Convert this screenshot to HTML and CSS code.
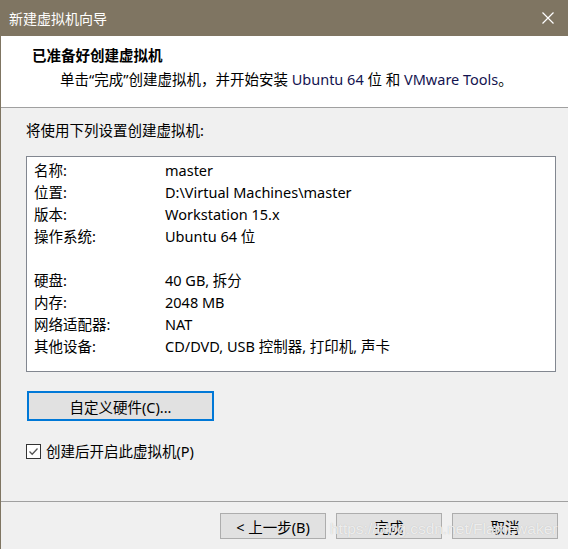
FILE: index.html
```html
<!DOCTYPE html>
<html lang="zh-CN">
<head>
    <meta charset="UTF-8">
    <title>新建虚拟机向导</title>
    <link rel="stylesheet" href="styles.css">
</head>
<body>
    <div class="window">
        <div class="titlebar">
            <span class="title">新建虚拟机向导</span>
            <span class="close">
                <svg width="12" height="12" viewBox="0 0 12 12">
                    <path d="M0.5 0.5 L11.5 11.5 M11.5 0.5 L0.5 11.5" stroke="#fff" stroke-width="1.2" fill="none"/>
                </svg>
            </span>
        </div>

        <div class="header">
            <div class="heading">已准备好创建虚拟机</div>
            <div class="subheading">单击“完成”创建虚拟机，并开始安装 <span class="en">Ubuntu 64</span> 位 和 <span class="en">VMware Tools</span>。</div>
        </div>

        <div class="content">
            <div class="intro">将使用下列设置创建虚拟机:</div>

            <div class="summary">
                <div class="row"><span class="key">名称:</span><span class="val">master</span></div>
                <div class="row"><span class="key">位置:</span><span class="val">D:\Virtual Machines\master</span></div>
                <div class="row"><span class="key">版本:</span><span class="val">Workstation 15.x</span></div>
                <div class="row"><span class="key">操作系统:</span><span class="val">Ubuntu 64 位</span></div>
                <div class="row"></div>
                <div class="row"><span class="key">硬盘:</span><span class="val">40 GB, 拆分</span></div>
                <div class="row"><span class="key">内存:</span><span class="val">2048 MB</span></div>
                <div class="row"><span class="key">网络适配器:</span><span class="val">NAT</span></div>
                <div class="row"><span class="key">其他设备:</span><span class="val">CD/DVD, USB 控制器, 打印机, 声卡</span></div>
            </div>

            <button class="btn btn-focus">自定义硬件(C)...</button>

            <label class="check">
                <span class="box">
                    <svg width="11" height="11" viewBox="0 0 11 11">
                        <path d="M1.5 5.5 L4.2 8.2 L9.5 2.5" stroke="#555" stroke-width="1.3" fill="none"/>
                    </svg>
                </span>
                创建后开启此虚拟机(P)
            </label>
        </div>

        <div class="footer">
            <button class="btn">&lt; 上一步(B)</button>
            <button class="btn">完成</button>
            <button class="btn">取消</button>
        </div>

        <div class="watermark">https://blog.csdn.net/Flamewaker</div>
    </div>
</body>
</html>
```

FILE: styles.css
```css
body {
    margin: 0;
    font-family: "Noto Sans", "Noto Sans CJK SC", sans-serif;
    font-size: 14.5px;
    color: #000000;
    background: #f0f0f0;
}
.window {
    position: relative;
    width: 567px;
    height: 549px;
    border-left: 1px solid #7f7562;
    background: #f0f0f0;
    display: flex;
    flex-direction: column;
    overflow: hidden;
}
.titlebar {
    height: 36px;
    background: #7f7562;
    display: flex;
    align-items: center;
    justify-content: space-between;
    padding-left: 8px;
    color: #ffffff;
}
.title {
    font-size: 14px;
}
.close {
    width: 40px;
    display: flex;
    justify-content: center;
}
.header {
    height: 63px;
    background: #ffffff;
    border-bottom: 1px solid #a0a0a0;
    padding-top: 8px;
    box-sizing: content-box;
}
.heading {
    font-weight: bold;
    padding-left: 31px;
    line-height: 22px;
}
.subheading {
    padding-left: 59px;
    line-height: 22px;
    margin-top: 2px;
}
.en {
    color: #141450;
}
.content {
    flex: 1;
    padding: 11px 12px 0 25px;
}
.intro {
    line-height: 22px;
}
.summary {
    margin-top: 15px;
    height: 212px;
    background: #ffffff;
    border: 1px solid #828790;
    padding-top: 2px;
}
.row {
    display: flex;
    height: 22px;
    line-height: 22px;
}
.key {
    width: 131px;
    padding-left: 7px;
}
.btn {
    font-family: inherit;
    font-size: 14.5px;
    color: #000000;
    background: #e1e1e1;
    border: 1px solid #adadad;
    width: 106px;
    height: 26px;
    padding: 0;
}
.btn-focus {
    margin-top: 19px;
    margin-left: 1px;
    width: 187px;
    height: 30px;
    border: 2px solid #0078d7;
    display: block;
}
.check {
    display: flex;
    align-items: center;
    gap: 5px;
    margin-top: 19px;
    margin-left: 0;
    line-height: 22px;
}
.box {
    width: 13px;
    height: 13px;
    border: 1px solid #333333;
    background: #ffffff;
    display: flex;
    align-items: center;
    justify-content: center;
}
.footer {
    height: 48px;
    border-top: 1px solid #a0a0a0;
    display: flex;
    justify-content: flex-end;
    gap: 10px;
    padding: 11px 10px 0 0;
    box-sizing: border-box;
}
.watermark {
    position: absolute;
    left: 329px;
    top: 520px;
    font-family: "Liberation Sans", sans-serif;
    font-size: 15.5px;
    color: rgba(250, 250, 250, 0.8);
    text-shadow: 0 0 1px #b8b8b8;
    pointer-events: none;
}
```
